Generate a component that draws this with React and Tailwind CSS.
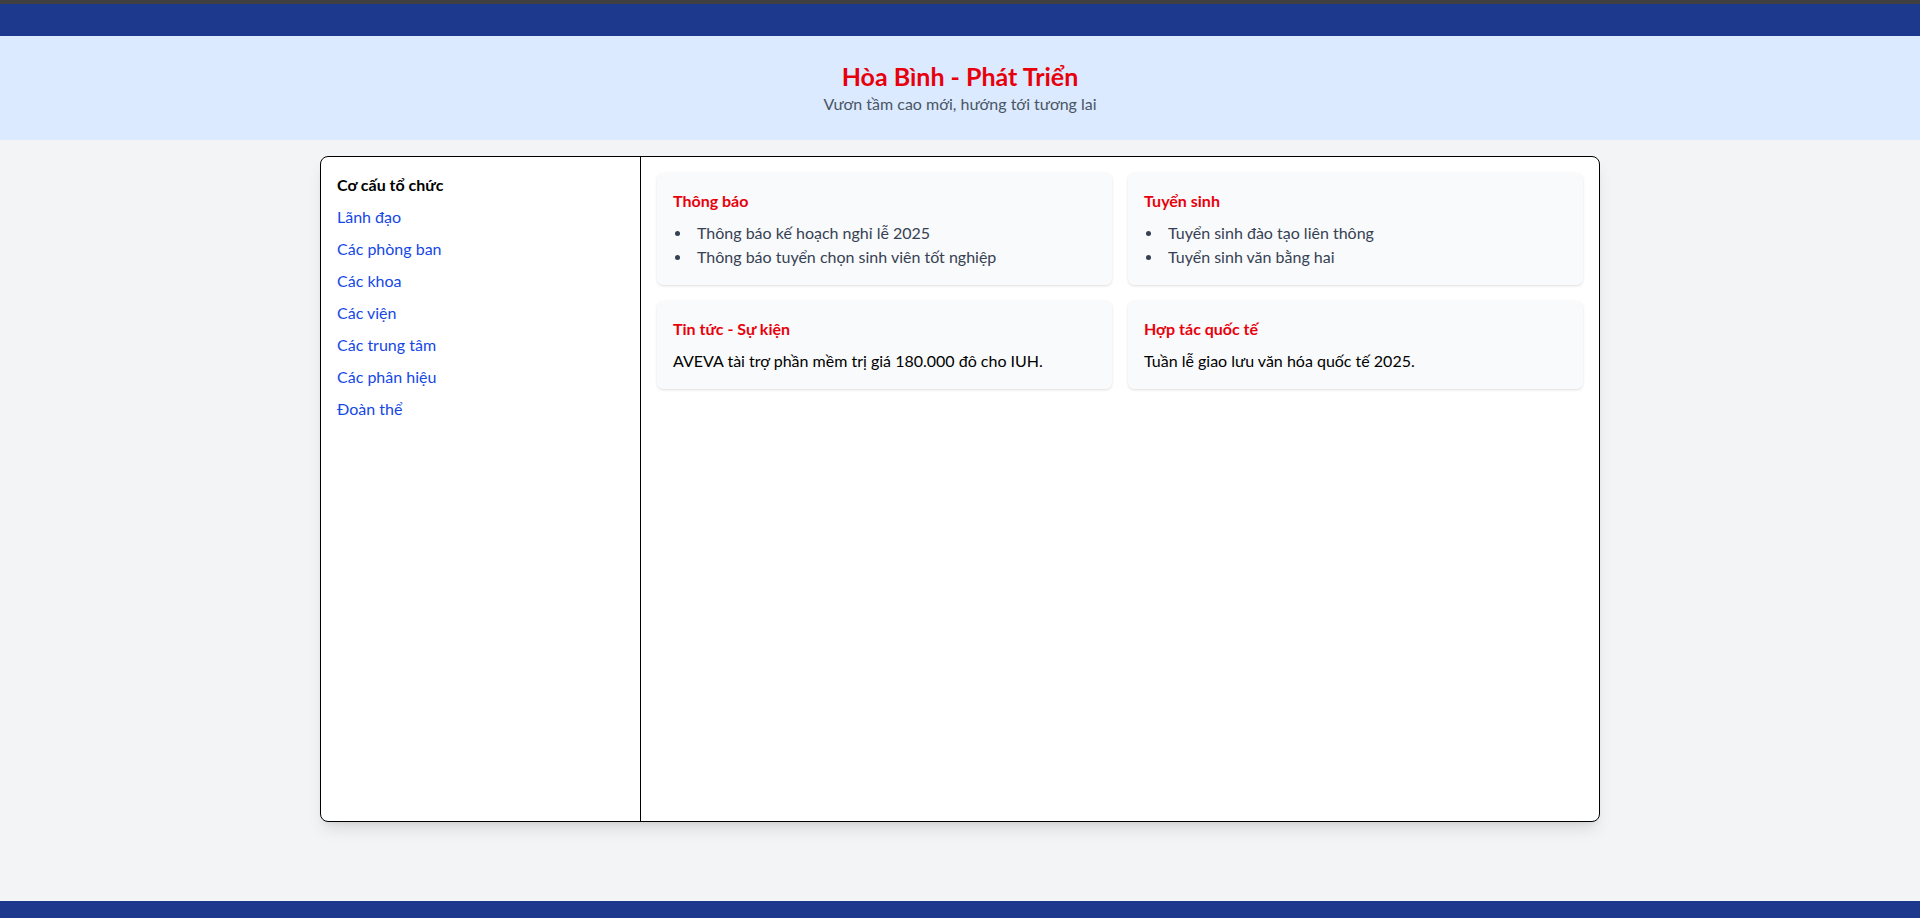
import React from 'react'

const FONT = "font-['Lato','Roboto',sans-serif]"

const SIDE_LINKS = ['Lãnh đạo', 'Các phòng ban', 'Các khoa', 'Các viện', 'Các trung tâm', 'Các phân hiệu', 'Đoàn thể']

const ListCard = ({ title, items }) => (
  <div className="bg-gray-50 rounded-md shadow-sm p-4">
    <h3 className="text-base leading-6 font-bold text-red-600">{title}</h3>
    <ul className="mt-2 text-gray-700 leading-6">
      {items.map(i => (
        <li key={i} className="flex items-center">
          <span className="w-[5px] h-[5px] rounded-full bg-gray-700 ml-[2px] mr-[17px] shrink-0" />
          <span>{i}</span>
        </li>
      ))}
    </ul>
  </div>
)

const TextCard = ({ title, text }) => (
  <div className="bg-gray-50 rounded-md shadow-sm p-4">
    <h3 className="text-base leading-6 font-bold text-red-600">{title}</h3>
    <p className="mt-2 leading-6 text-black">{text}</p>
  </div>
)

export default function App() {
  return (
    <div className={`min-h-screen bg-gray-100 ${FONT}`}>
      <div className="h-1 bg-[#404040]" />
      <nav className="h-8 bg-blue-900" />

      <header className="bg-blue-100 py-6 text-center">
        <h1 className="text-[25px] leading-8 font-bold text-red-600">Hòa Bình - Phát Triển</h1>
        <p className="text-base leading-6 text-gray-600">Vươn tầm cao mới, hướng tới tương lai</p>
      </header>

      <main className="pt-4 pb-[79px]">
        <div className="max-w-7xl mx-auto h-[666px] flex bg-white border border-black rounded-lg shadow-lg overflow-hidden">
          <aside className="w-[320px] shrink-0 border-r border-black p-4">
            <h2 className="font-bold leading-6 text-black">Cơ cấu tổ chức</h2>
            <ul className="mt-2 space-y-2">
              {SIDE_LINKS.map(l => (
                <li key={l}><a href="#" className="leading-6 text-blue-700 hover:underline">{l}</a></li>
              ))}
            </ul>
          </aside>

          <section className="flex-1 p-4">
            <div className="grid grid-cols-2 gap-4">
              <ListCard title="Thông báo" items={['Thông báo kế hoạch nghỉ lễ 2025', 'Thông báo tuyển chọn sinh viên tốt nghiệp']} />
              <ListCard title="Tuyển sinh" items={['Tuyển sinh đào tạo liên thông', 'Tuyển sinh văn bằng hai']} />
              <TextCard title="Tin tức - Sự kiện" text="AVEVA tài trợ phần mềm trị giá 180.000 đô cho IUH." />
              <TextCard title="Hợp tác quốc tế" text="Tuần lễ giao lưu văn hóa quốc tế 2025." />
            </div>
          </section>
        </div>
      </main>

      <footer className="h-12 bg-blue-900" />
    </div>
  )
}
